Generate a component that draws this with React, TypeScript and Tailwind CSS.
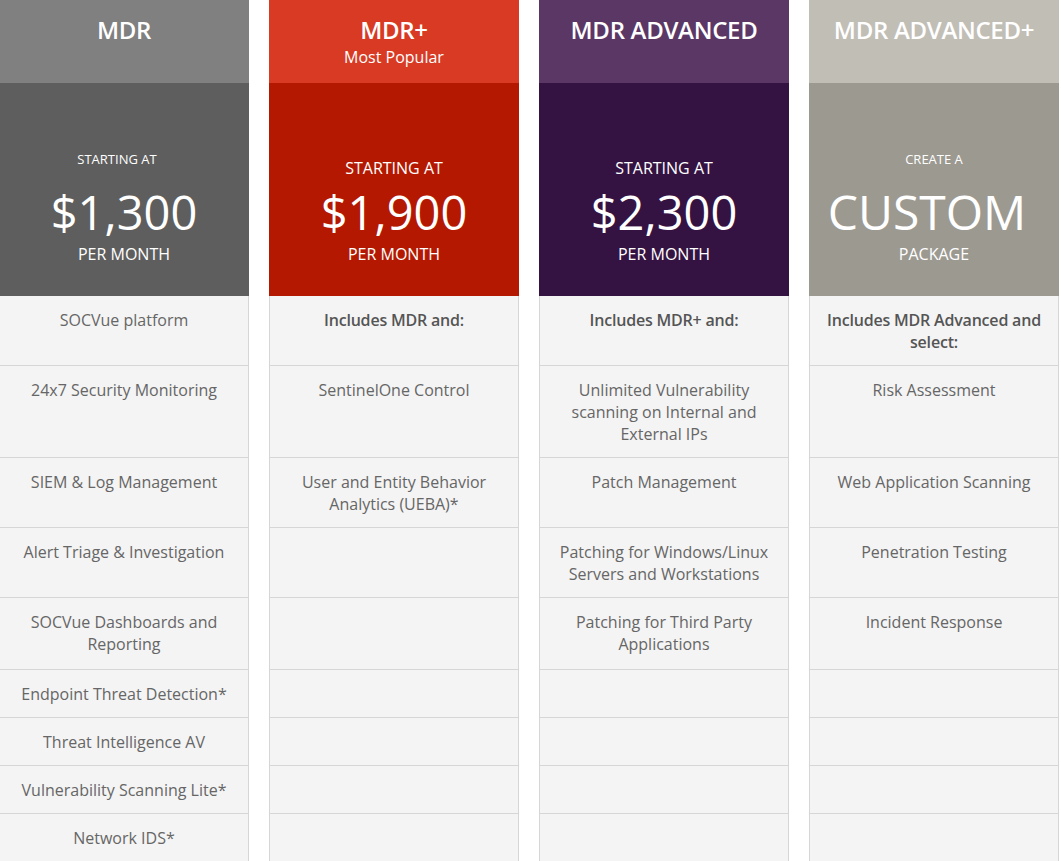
const rowHeights = [
  "h-[70px]",
  "h-[92px]",
  "h-[70px]",
  "h-[70px]",
  "h-[72px]",
  "h-[48px]",
  "h-[48px]",
  "h-[48px]",
  "h-[48px]",
];

type Plan = {
  name: string;
  sub?: string;
  headBg: string;
  priceBg: string;
  label: string;
  smallLabel: boolean;
  labelShift?: boolean;
  price: string;
  unit: string;
  items: string[];
  leadBold?: boolean;
  custom?: boolean;
};

const plans: Plan[] = [
  {
    name: "MDR",
    headBg: "bg-[#808080]",
    priceBg: "bg-[#5e5e5e]",
    label: "STARTING AT",
    smallLabel: true,
    labelShift: true,
    price: "$1,300",
    unit: "PER MONTH",
    items: [
      "SOCVue platform",
      "24x7 Security Monitoring",
      "SIEM & Log Management",
      "Alert Triage & Investigation",
      "SOCVue Dashboards and Reporting",
      "Endpoint Threat Detection*",
      "Threat Intelligence AV",
      "Vulnerability Scanning Lite*",
      "Network IDS*",
    ],
  },
  {
    name: "MDR+",
    sub: "Most Popular",
    headBg: "bg-[#d93a23]",
    priceBg: "bg-[#b51800]",
    label: "STARTING AT",
    smallLabel: false,
    price: "$1,900",
    unit: "PER MONTH",
    leadBold: true,
    items: [
      "Includes MDR and:",
      "SentinelOne Control",
      "User and Entity Behavior Analytics (UEBA)*",
      "",
      "",
      "",
      "",
      "",
      "",
    ],
  },
  {
    name: "MDR ADVANCED",
    headBg: "bg-[#5b3766]",
    priceBg: "bg-[#341342]",
    label: "STARTING AT",
    smallLabel: false,
    price: "$2,300",
    unit: "PER MONTH",
    leadBold: true,
    items: [
      "Includes MDR+ and:",
      "Unlimited Vulnerability scanning on Internal and External IPs",
      "Patch Management",
      "Patching for Windows/Linux Servers and Workstations",
      "Patching for Third Party Applications",
      "",
      "",
      "",
      "",
    ],
  },
  {
    name: "MDR ADVANCED+",
    headBg: "bg-[#c1beb6]",
    priceBg: "bg-[#9c9991]",
    label: "CREATE A",
    smallLabel: true,
    price: "CUSTOM",
    unit: "PACKAGE",
    leadBold: true,
    custom: true,
    items: [
      "Includes MDR Advanced and select:",
      "Risk Assessment",
      "Web Application Scanning",
      "Penetration Testing",
      "Incident Response",
      "",
      "",
      "",
      "",
    ],
  },
];

export default function App() {
  return (
    <div
      className="h-[861px] w-[1061px] overflow-hidden bg-white"
      style={{ fontFamily: '"Open Sans", "Noto Sans", sans-serif' }}
    >
      <div className="-ml-px flex gap-[20px]">
        {plans.map((p) => (
          <PlanColumn key={p.name} plan={p} />
        ))}
      </div>
    </div>
  );
}

function PlanColumn({ plan }: { plan: Plan }) {
  return (
    <div className="flex w-[250px] shrink-0 flex-col text-center">
      {/* Header */}
      <div className={`h-[83px] pt-[15px] text-white ${plan.headBg}`}>
        <div className="text-[24px] font-semibold leading-[30px] tracking-[-0.3px]">
          {plan.name}
        </div>
        {plan.sub && (
          <div className="mt-px text-[16px] leading-[22px]">{plan.sub}</div>
        )}
      </div>

      {/* Price */}
      <div className={`flex h-[213px] flex-col items-center text-white ${plan.priceBg}`}>
        {plan.smallLabel ? (
          <div
            className={`mt-[68px] h-[16px] text-[13px] leading-[16px] ${
              plan.labelShift ? "pr-[14px]" : ""
            }`}
          >
            {plan.label}
          </div>
        ) : (
          <div className="mt-[74px] h-[22px] text-[16px] leading-[22px]">
            {plan.label}
          </div>
        )}
        <div
          className={`h-[56px] leading-[56px] ${
            plan.smallLabel ? "mt-[17px]" : "mt-[5px]"
          } ${plan.custom ? "pr-[14px] text-[48px]" : "text-[47px]"}`}
        >
          {plan.price}
        </div>
        <div className="mt-[3px] text-[16px] leading-[22px]">{plan.unit}</div>
      </div>

      {/* Features */}
      {plan.items.map((item, i) => (
        <div
          key={i}
          className={`${rowHeights[i]} border-x border-b border-[#d6d6d6] bg-[#f4f4f4] px-[10px] pt-[13px] text-[16px] leading-[22px] ${
            i === 0 && plan.leadBold
              ? "font-semibold tracking-[-0.2px] text-[#555555]"
              : "text-[#666666]"
          }`}
        >
          {item}
        </div>
      ))}
    </div>
  );
}
